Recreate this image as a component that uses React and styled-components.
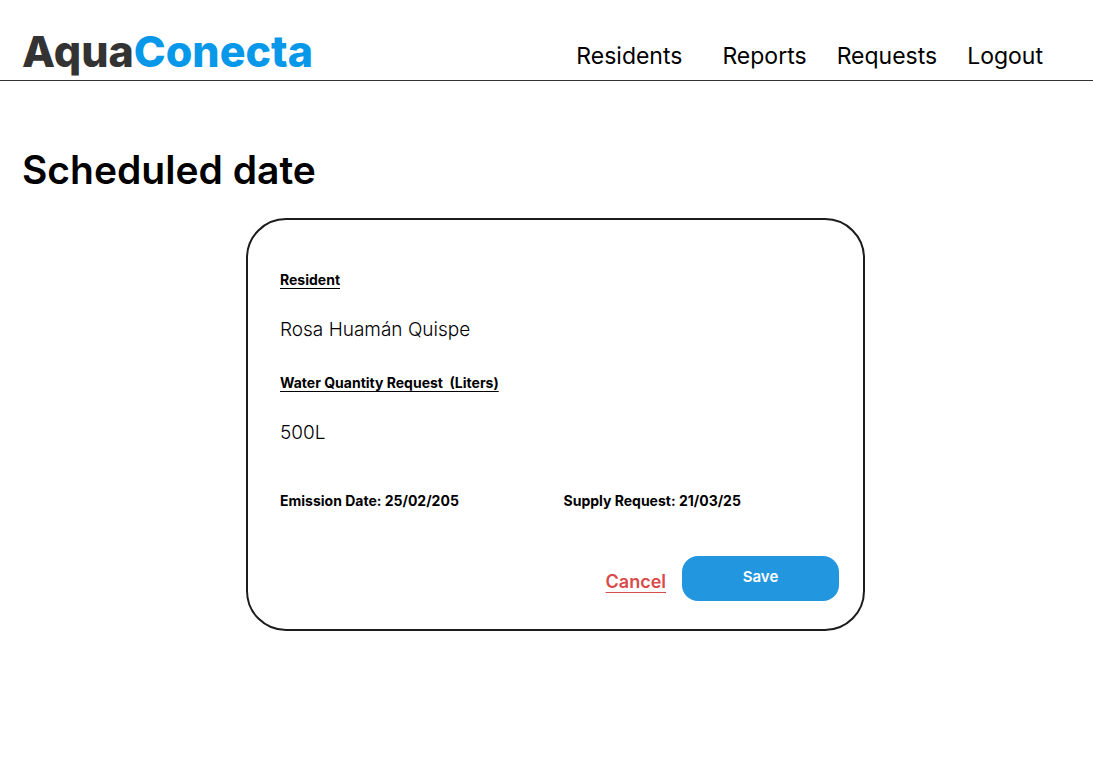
import React from "react";
import styled, { createGlobalStyle } from "styled-components";

const GlobalStyle = createGlobalStyle`
  * { box-sizing: border-box; }
  body {
    margin: 0;
    background: #fff;
    color: #000;
    font-family: Inter, "Liberation Sans", sans-serif;
  }
`;

const Header = styled.header`
  display: flex;
  align-items: flex-end;
  justify-content: space-between;
  min-height: 81px;
  padding: 0 50px 0 22px;
  border-bottom: 1px solid #333;
`;

const Logo = styled.a`
  color: #333;
  font-size: 43px;
  font-weight: 800;
  line-height: 58px;
  text-decoration: none;
`;

const LogoAccent = styled.span`
  color: #0798ea;
`;

const Nav = styled.nav`
  display: flex;
  gap: 30px;
  padding-bottom: 8px;
`;

const NavLink = styled.a`
  color: #000;
  font-size: 23px;
  line-height: 32px;
  text-decoration: none;

  &:first-child {
    margin-right: 10px;
  }
`;

const Main = styled.main`
  padding: 64px 4px 40px 22px;
`;

const Title = styled.h1`
  margin: 0;
  font-size: 39px;
  font-weight: 600;
  line-height: 50px;
`;

const Card = styled.section`
  width: 100%;
  max-width: 619px;
  margin: 23px auto 0;
  padding: 50px 24px 28px 32px;
  border: 2px solid #1c1c1c;
  border-radius: 40px;
`;

const Details = styled.dl`
  display: grid;
  justify-items: start;
  margin: 0;
`;

const Label = styled.dt`
  font-size: 14px;
  font-weight: 700;
  line-height: 20px;
  white-space: pre;
  text-decoration: underline 1px;
  text-underline-offset: 3px;
`;

const Value = styled.dd`
  margin: 28px 0 31px;
  font-size: 19px;
  font-weight: 300;
  line-height: 24px;

  &:last-child {
    margin-bottom: 46px;
  }
`;

const Dates = styled.div`
  display: grid;
  grid-template-columns: 1fr 1fr;
  column-gap: 8px;
`;

const DateText = styled.p`
  margin: 0;
  font-size: 14px;
  font-weight: 700;
  line-height: 20px;
`;

const Actions = styled.div`
  display: flex;
  justify-content: flex-end;
  align-items: flex-end;
  gap: 16px;
  margin-top: 45px;
`;

const CancelButton = styled.button`
  padding: 0 0 7px;
  border: 0;
  background: none;
  color: #d94a4a;
  font: 600 18px/24px Inter, "Liberation Sans", sans-serif;
  text-decoration: underline 1px;
  text-underline-offset: 4px;
  cursor: pointer;
`;

const SaveButton = styled.button`
  width: 157px;
  height: 45px;
  padding: 0 0 4px;
  border: 0;
  border-radius: 16px;
  background: #2297e0;
  color: #fff;
  font: 600 15px/20px Inter, "Liberation Sans", sans-serif;
  cursor: pointer;
`;

const links = ["Residents", "Reports", "Requests", "Logout"];

export default function App() {
  return (
    <>
      <GlobalStyle />
      <Header>
        <Logo href="#">
          Aqua<LogoAccent>Conecta</LogoAccent>
        </Logo>
        <Nav>
          {links.map((name) => (
            <NavLink key={name} href={`#${name.toLowerCase()}`}>
              {name}
            </NavLink>
          ))}
        </Nav>
      </Header>
      <Main>
        <Title>Scheduled date</Title>
        <Card>
          <Details>
            <Label>Resident</Label>
            <Value>Rosa Huamán Quispe</Value>
            <Label>{"Water Quantity Request  (Liters)"}</Label>
            <Value>500L</Value>
          </Details>
          <Dates>
            <DateText>Emission Date: 25/02/205</DateText>
            <DateText>Supply Request: 21/03/25</DateText>
          </Dates>
          <Actions>
            <CancelButton type="button">Cancel</CancelButton>
            <SaveButton type="button">Save</SaveButton>
          </Actions>
        </Card>
      </Main>
    </>
  );
}
